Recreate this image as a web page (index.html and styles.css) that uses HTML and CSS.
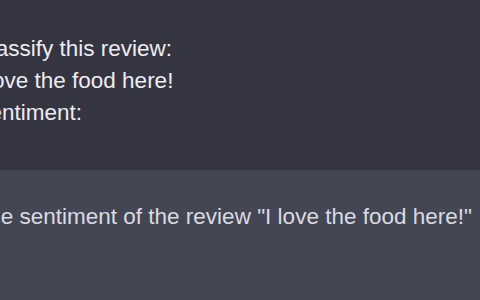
FILE: index.html
```html
<!DOCTYPE html>
<html lang="en">
<head>
    <meta charset="UTF-8">
    <title>Chat</title>
    <link rel="stylesheet" href="styles.css">
</head>
<body>
    <div class="message user">
        <div class="message-text">
            <div>Classify this review:</div>
            <div>I love the food here!</div>
            <div>Sentiment:</div>
        </div>
    </div>
    <div class="message assistant">
        <div class="message-text">
            <div>The sentiment of the review "I love the food here!"</div>
        </div>
    </div>
</body>
</html>
```

FILE: styles.css
```css
body { margin: 0; font-family: "Liberation Sans", Arial, sans-serif; background: #343541; overflow: hidden; }
.message { height: 170px; box-sizing: border-box; }
.message-text { margin-left: -25.5px; font-size: 22.5px; line-height: 32px; white-space: nowrap; }
.user { padding-top: 33px; color: #ececf1; }
.assistant { height: 130px; padding-top: 31px; background: #444654; color: #d9dbe2; }
```
